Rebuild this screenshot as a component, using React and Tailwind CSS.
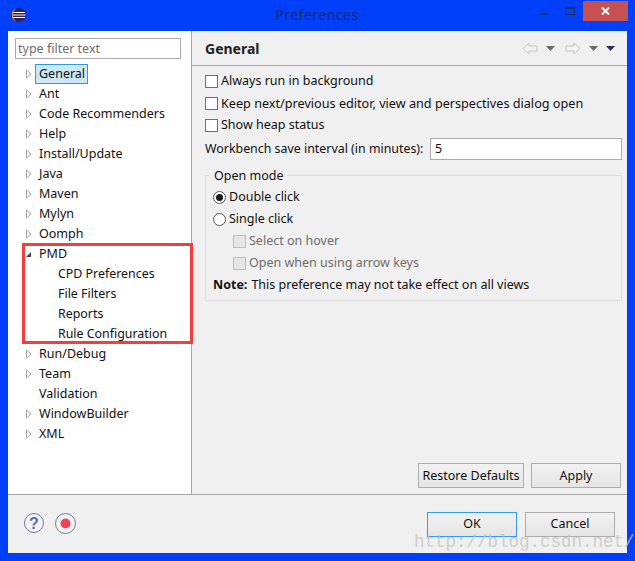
import React from 'react';

const FONT = 'font-["Noto_Sans","Open_Sans",sans-serif]';

const treeItems = [
  { label: 'General', selected: true },
  { label: 'Ant' },
  { label: 'Code Recommenders' },
  { label: 'Help' },
  { label: 'Install/Update' },
  { label: 'Java' },
  { label: 'Maven' },
  { label: 'Mylyn' },
  { label: 'Oomph' },
  { label: 'PMD', open: true },
  { label: 'CPD Preferences', child: true },
  { label: 'File Filters', child: true },
  { label: 'Reports', child: true },
  { label: 'Rule Configuration', child: true },
  { label: 'Run/Debug' },
  { label: 'Team' },
  { label: 'Validation', leaf: true },
  { label: 'WindowBuilder' },
  { label: 'XML' },
];

const TreeArrow = ({ open }) =>
  open ? (
    <svg width="7" height="9" viewBox="0 0 7 9" className="shrink-0">
      <path d="M6 2v5H1z" fill="#444" />
    </svg>
  ) : (
    <svg width="7" height="10" viewBox="0 0 7 10" className="shrink-0">
      <path d="M1.500 1v8L6 5z" fill="#fff" stroke="#a6a6a6" />
    </svg>
  );

const TreeRow = ({ item }) => {
  if (item.child) {
    return (
      <div className="h-5 flex items-center pl-[50px] text-[12.400px] text-[#111]">
        {item.label}
      </div>
    );
  }
  return (
    <div className="h-5 flex items-center pl-[17px] text-[12.500px] text-[#111]">
      <div className="w-[7px] flex items-center">
        {!item.leaf && <TreeArrow open={item.open} />}
      </div>
      {item.selected ? (
        <span className="ml-[3px] w-[53px] pl-[3px] h-[20px] flex items-center bg-[#cce8f6] border border-[#2f9bd6]">
          {item.label}
        </span>
      ) : (
        <span className="ml-[7px]">{item.label}</span>
      )}
    </div>
  );
};

const CheckBox = ({ disabled }) => (
  <div
    className={`w-[13px] h-[13px] shrink-0 border ${
      disabled ? 'border-[#bdbdbd] bg-[#e6e6e6]' : 'border-[#707070] bg-white'
    }`}
  />
);

const Radio = ({ checked }) => (
  <div className="w-[13px] h-[13px] shrink-0 rounded-full border border-[#555] bg-white flex items-center justify-center">
    {checked && <div className="w-[7px] h-[7px] rounded-full bg-[#1a1a1a]" />}
  </div>
);

const Button = ({ children, className = '' }) => (
  <div
    className={`h-[25px] pt-px flex items-center justify-center border bg-gradient-to-b from-[#f2f2f2] to-[#e5e5e5] text-[12.500px] text-[#111] ${className}`}
  >
    {children}
  </div>
);

const NavArrow = ({ right }) => (
  <svg width="16" height="13" viewBox="0 0 16 13" className={right ? '' : '-scale-x-100'}>
    <path d="M1 4h8V1l6 5.500-6 5.500V9H1z" fill="#f4f4f4" stroke="#c4c4c4" />
  </svg>
);

const Caret = ({ dark }) => (
  <svg width="9" height="5" viewBox="0 0 9 5">
    <path d="M0 0h9L4.500 5z" fill={dark ? '#35285c' : '#6a6a6a'} />
  </svg>
);

export default function App() {
  return (
    <div className={`relative w-[635px] h-[561px] overflow-hidden bg-[#0040fb] flex flex-col ${FONT}`}>
      {/* title bar */}
      <div className="h-[31px] shrink-0 flex pl-[12px] pr-[7px]">
        <svg width="14" height="14" viewBox="0 0 14 14" className="mt-[8px]">
          <circle cx="7" cy="7" r="7" fill="#2c2255" />
          <path d="M0 7a7 7 0 0 1 3-5.700M0 7a7 7 0 0 0 3 5.700" fill="none" stroke="#f7941e" strokeWidth="1" />
          <path d="M1 4.500h12M0.500 7h13M1 9.500h12" stroke="#fff" strokeWidth="1.200" />
        </svg>
        <div className="flex-1 text-center pt-[5px] text-[14px] leading-[20px] tracking-[0.5px] text-[#12296b] pl-[68px]">
          Preferences
        </div>
        <div className="flex items-start">
          <div className="w-[8px] h-[2px] bg-[#17357f] mt-[13px] mr-[17px]" />
          <div className="w-[10px] h-[8px] border border-t-2 border-[#1c2a55] mt-[7px] mr-[8px]" />
          <div className="w-[45px] h-[20px] mt-px bg-[#c75050] flex items-center justify-center">
            <svg width="9" height="8" viewBox="0 0 9 8">
              <path d="M1 .5l7 7M8 .5l-7 7" stroke="#fff" strokeWidth="2" />
            </svg>
          </div>
        </div>
      </div>

      {/* client area */}
      <div className="mx-2 mb-2 flex-1 flex flex-col bg-[#f0f0f0]">
        <div className="h-[464px] flex border-b border-[#a8a8a8]">
          {/* left tree */}
          <div className="w-[184px] shrink-0 bg-white pl-[7px] pt-[7px] border-r border-[#a8a8a8]">
            <div className="w-[166px] h-[21px] pt-px border border-[#ababab] flex items-center pl-[2px] text-[12.500px] text-[#6d6d6d]">
              type filter text
            </div>
            <div className="-ml-[7px] mt-[5px]">
              {treeItems.map((item) => (
                <TreeRow key={item.label} item={item} />
              ))}
            </div>
          </div>

          {/* right page */}
          <div className="flex-1 flex flex-col min-w-0">
            <div className="h-[35px] shrink-0 border-b border-[#a8a8a8] flex items-center pl-[13px] pr-[12px]">
              <div className="flex-1 text-[14px] font-bold text-[#222]">General</div>
              <div className="flex items-center">
                <NavArrow />
                <div className="ml-[8px]"><Caret /></div>
                <div className="ml-[10px]"><NavArrow right /></div>
                <div className="ml-[8px]"><Caret /></div>
                <div className="ml-[8px]"><Caret dark /></div>
              </div>
            </div>

            <div className="flex-1 pl-[13px] pr-[5px] pt-[4px] flex flex-col text-[12.500px] text-[#111]">
              <div className="h-[22px] flex items-center gap-[3px]"><CheckBox />Always run in background</div>
              <div className="h-[22px] flex items-center gap-[3px]"><CheckBox /><span className="text-[12.650px]">Keep next/previous editor, view and perspectives dialog open</span></div>
              <div className="h-[22px] flex items-center gap-[3px]"><CheckBox />Show heap status</div>
              <div className="h-[22px] mt-[2px] flex items-center">
                <span className="w-[225px] shrink-0 pt-px text-[12.400px]">Workbench save interval (in minutes):</span>
                <div className="flex-1 h-[22px] bg-white border border-[#ababab] flex items-center pl-[4px]">5</div>
              </div>

              {/* open mode group */}
              <div className="relative mt-[15px] h-[126px] border border-[#dcdcdc] pl-[7px] pt-[10px]">
                <div className="absolute -top-[10px] left-[4px] px-[4px] bg-[#f0f0f0] leading-[20px]">Open mode</div>
                <div className="h-[22px] flex items-center gap-[3px]"><Radio checked />Double click</div>
                <div className="h-[22px] flex items-center gap-[3px]"><Radio />Single click</div>
                <div className="h-[22px] pl-[20px] flex items-center gap-[3px] text-[#6d6d6d]"><CheckBox disabled />Select on hover</div>
                <div className="h-[22px] pl-[20px] flex items-center gap-[3px] text-[#6d6d6d]"><CheckBox disabled />Open when using arrow keys</div>
                <div className="h-[22px] flex items-center"><b className="mr-[4px]">Note:</b>This preference may not take effect on all views</div>
              </div>

              <div className="mt-auto mb-[6px] flex justify-end gap-[7px] pr-[1px]">
                <Button className="w-[106px] border-[#adadad]">Restore Defaults</Button>
                <Button className="w-[90px] border-[#adadad]">Apply</Button>
              </div>
            </div>
          </div>
        </div>

        {/* bottom bar */}
        <div className="flex-1 flex items-center pl-[16px] pr-[12px]">
          <svg width="20" height="20" viewBox="0 0 20 20" className="-mt-[2px]">
            <circle cx="10" cy="10" r="9.500" fill="#f2f3f6" stroke="#6a7d9e" />
            <text x="10" y="15.500" textAnchor="middle" fontSize="16" fontWeight="700" fill="#5c7096" fontFamily="Liberation Sans">?</text>
          </svg>
          <svg width="21" height="21" viewBox="0 0 21 21" className="ml-[11px] -mt-[2px]">
            <circle cx="10.500" cy="10.500" r="10" fill="#f2f3f6" stroke="#6a7d9e" />
            <circle cx="10.500" cy="10.500" r="5" fill="#ee4458" />
          </svg>
          <div className="flex-1" />
          <Button className="w-[90px] border-[#3399ff]">OK</Button>
          <Button className="w-[90px] ml-[8px] border-[#adadad]">Cancel</Button>
        </div>
      </div>

      {/* red annotation box */}
      <div className="absolute left-[22px] top-[243px] w-[171px] h-[101px] border-[3px] border-[#f73c3c]" />
      {/* blog watermark */}
      <div className='absolute left-[414px] top-[532px] text-[17.500px] leading-[20px] text-[#c4c4bc]/80 font-["Liberation_Mono",monospace]'>
        http://blog.csdn.net/
      </div>
    </div>
  );
}
